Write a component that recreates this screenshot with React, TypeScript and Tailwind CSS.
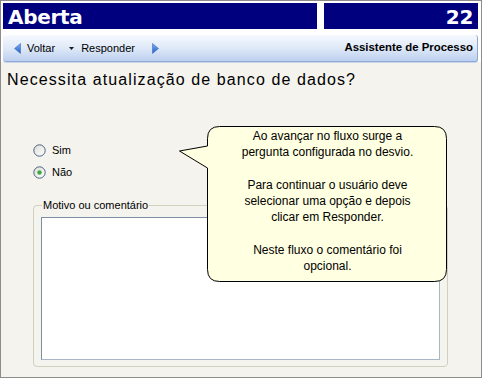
import React from "react";

function LeftTri() {
  return (
    <svg width="7" height="11" viewBox="0 0 7 11">
      <defs>
        <linearGradient id="lt" x1="0" y1="0" x2="0" y2="1">
          <stop offset="0" stopColor="#7fb0ee" />
          <stop offset="1" stopColor="#1f5fc8" />
        </linearGradient>
      </defs>
      <path d="M6.5 0.5 L0.5 5.5 L6.5 10.5 Z" fill="url(#lt)" stroke="#3e6fc0" strokeWidth="0.6" />
    </svg>
  );
}

function RightTri() {
  return (
    <svg width="7" height="11" viewBox="0 0 7 11">
      <defs>
        <linearGradient id="rt" x1="0" y1="0" x2="0" y2="1">
          <stop offset="0" stopColor="#7fb0ee" />
          <stop offset="1" stopColor="#1f5fc8" />
        </linearGradient>
      </defs>
      <path d="M0.5 0.5 L6.5 5.5 L0.5 10.5 Z" fill="url(#rt)" stroke="#3e6fc0" strokeWidth="0.6" />
    </svg>
  );
}

function Radio({ checked }: { checked?: boolean }) {
  return (
    <svg width="13" height="13" viewBox="0 0 13 13">
      <defs>
        <linearGradient id={checked ? "rg1" : "rg0"} x1="0" y1="0" x2="1" y2="1">
          <stop offset="0" stopColor="#dcdcd6" />
          <stop offset="1" stopColor="#ffffff" />
        </linearGradient>
      </defs>
      <circle cx="6.5" cy="6.5" r="5.7" fill={`url(#${checked ? "rg1" : "rg0"})`} stroke="#4d6185" strokeWidth="1" />
      {checked && <circle cx="6.5" cy="6.5" r="2.2" fill="#3fa83f" />}
    </svg>
  );
}

export default function App() {
  return (
    <div className="relative w-[482px] h-[378px] border border-[#8c8c8c] bg-[#f4f3ee] flex flex-col font-['Liberation_Sans',Arial,sans-serif] overflow-hidden">
      {/* header */}
      <div className="bg-white flex flex-col pt-[2px] pl-[2px] pr-[3px]">
        <div className="flex gap-[7px] h-[26px]">
          <div className="w-[314px] bg-[#00007f] flex items-center pl-[5px]">
            <span className="text-white font-bold text-[20px] leading-none tracking-[-0.3px] font-['DejaVu_Sans',sans-serif] mt-[1px]">Aberta</span>
          </div>
          <div className="flex-1 bg-[#00007f] flex items-center justify-end pr-[5px]">
            <span className="text-white font-bold text-[20px] leading-none tracking-[-0.3px] font-['DejaVu_Sans',sans-serif] mt-[1px]">22</span>
          </div>
        </div>
        <div className="h-[6px]" />
        <div className="h-[27px] rounded-[3px] border-b border-r border-[#8ea9d6] bg-gradient-to-b from-[#f6f9fe] via-[#dfe9f8] to-[#bdd0ef] flex items-center text-[11px] text-black shadow-[0_1px_0_#c9d6ea]">
          <div className="flex items-center ml-[11px] gap-[6px]">
            <LeftTri />
            <span>Voltar</span>
          </div>
          <div className="flex items-center ml-[14px] gap-[7px]">
            <svg width="5" height="3" viewBox="0 0 5 3"><path d="M0 0 H5 L2.5 3 Z" fill="#1a1a1a" /></svg>
            <span>Responder</span>
          </div>
          <div className="ml-[17px] flex items-center">
            <RightTri />
          </div>
          <span className="ml-auto mr-[4px] font-bold text-[11.4px]">Assistente de Processo</span>
        </div>
      </div>

      {/* content */}
      <div className="flex-1 flex flex-col pl-[6px]">
        <div className="mt-[8px] text-[16px] leading-[19px] tracking-[1.1px] text-black">Necessita atualização de banco de dados?</div>
        <div className="mt-[55px] ml-[26px] flex flex-col gap-[10px] text-[11px]">
          <div className="flex items-center gap-[6px] h-[12px]">
            <Radio />
            <span>Sim</span>
          </div>
          <div className="flex items-center gap-[6px] h-[12px]">
            <Radio checked />
            <span>Não</span>
          </div>
        </div>
        <fieldset className="mt-[21px] ml-[26px] w-[415px] border border-[#d0d0bf] rounded-[4px] px-[7px] pb-[6px] pt-0">
          <legend className="text-[11px] px-[1px] ml-[1px] leading-[13px] text-black">Motivo ou comentário</legend>
          <div className="mt-[5px] w-full h-[143px] bg-white border border-[#7f8fa3] border-r-[#a9b6c6] border-b-[#a9b6c6]" />
        </fieldset>
      </div>

      {/* callout */}
      <div className="absolute left-[177px] top-[125px]">
        <svg width="272" height="158" viewBox="0 0 272 158" className="absolute left-0 top-0">
          <path
            d="M41.5 0.5 H256.5 Q268.5 0.5 268.5 12.5 V143.5 Q268.5 155.5 256.5 155.5 H41.5 Q29.5 155.5 29.5 143.5 V42 L1.5 25 L29.5 20 V12.5 Q29.5 0.5 41.5 0.5 Z"
            fill="#ffffe1"
            stroke="#000"
            strokeWidth="1"
          />
        </svg>
        <div className="relative ml-[30px] w-[239px] pt-[2px] text-center text-[12px] leading-[16.3px] text-black">
          <p>Ao avançar no fluxo surge a<br />pergunta configurada no desvio.</p>
          <p className="mt-[16.3px]">Para continuar o usuário deve<br />selecionar uma opção e depois<br />clicar em Responder.</p>
          <p className="mt-[16.3px]">Neste fluxo o comentário foi<br />opcional.</p>
        </div>
      </div>
    </div>
  );
}
